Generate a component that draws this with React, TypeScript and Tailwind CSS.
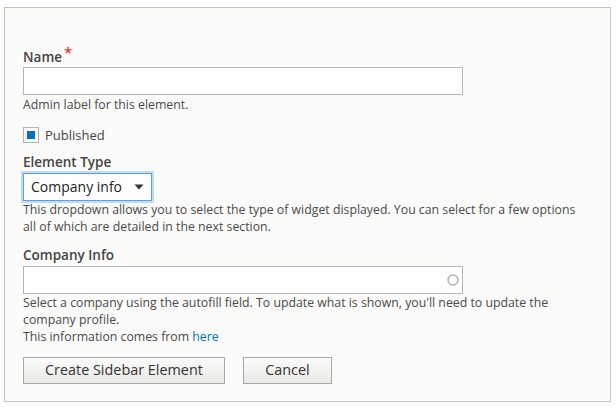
import React from "react";

export default function App() {
  const font = { fontFamily: '"Open Sans", "Noto Sans", sans-serif' };
  return (
    <div className="w-[616px] h-[410px] bg-white pt-[7px] pl-[4px]" style={font}>
      <div className="w-[607px] h-[395px] border border-[#c2c2bf] bg-[#fbfbf9] pl-[18px] pt-[39px] text-[#3a3a3a]">
        {/* Name */}
        <div className="text-[13.5px] leading-[18px] font-semibold text-[#444]">
          Name
          <span className="relative top-[-4px] ml-[2px] text-[15px] font-normal text-[#e3130f]">*</span>
        </div>
        <div className="mt-[1px] w-[440px] h-[28px] border border-[#b5b5b3] bg-white" />
        <div className="mt-px text-[12.3px] leading-[17px] text-[#4a4a4a]">Admin label for this element.</div>

        {/* Published */}
        <div className="mt-[14px] flex items-center h-[16px]">
          <div className="w-[16px] h-[16px] border border-[#b3b3b3] bg-white flex items-center justify-center">
            <div className="w-[8px] h-[8px] bg-[#0072c0]" />
          </div>
          <span className="ml-[6px] text-[13px] leading-[18px] text-[#444]">Published</span>
        </div>

        {/* Element Type */}
        <div className="mt-[10px] text-[13.5px] leading-[18px] font-semibold text-[#444]">Element Type</div>
        <div className="mt-[2px] w-[129px] h-[28px] border border-[#5f9fd6] bg-white shadow-[0_0_0_2px_#bcdcf7] flex items-center pl-[7px] pr-[7px]">
          <span className="text-[14px] leading-[18px] text-[#222] flex-1">Company info</span>
          <svg width="10" height="6" viewBox="0 0 10 6">
            <path d="M0.5 0.5 L9.5 0.5 L5 5.5 Z" fill="#333" />
          </svg>
        </div>
        <div className="mt-[1px] text-[12.3px] leading-[16.6px] text-[#4a4a4a] w-[565px]">
          This dropdown allows you to select the type of widget displayed. You can select for a few options all of which are detailed in the next section.
        </div>

        {/* Company Info */}
        <div className="mt-[11px] text-[13.5px] leading-[18px] font-semibold text-[#444]">Company Info</div>
        <div className="mt-[2px] w-[440px] h-[28px] border border-[#b5b5b3] bg-white flex items-center justify-end pr-[2px]">
          <svg width="14" height="14" viewBox="0 0 14 14">
            <circle cx="7" cy="7" r="5" fill="none" stroke="#b3b3b3" strokeWidth="1.5" />
          </svg>
        </div>
        <div className="mt-[1px] text-[12.3px] leading-[16.8px] text-[#4a4a4a] w-[565px]">
          <div>
            Select a company using the autofill field. To update what is shown, you'll need to update the company profile.
          </div>
          <div>
            This information comes from <a className="text-[#0074bd]" href="#">here</a>
          </div>
        </div>

        {/* Buttons */}
        <div className="mt-[11px] flex gap-[18px]">
          <button className="h-[27px] px-[21px] border border-[#a9a9a7] bg-gradient-to-b from-[#fbfbf9] to-[#e9e9e5] text-[14.4px] leading-[18px] text-[#333]">
            Create Sidebar Element
          </button>
          <button className="h-[27px] w-[89px] border border-[#a9a9a7] bg-gradient-to-b from-[#fbfbf9] to-[#e9e9e5] text-[14.4px] leading-[18px] text-[#333]">
            Cancel
          </button>
        </div>
      </div>
    </div>
  );
}
